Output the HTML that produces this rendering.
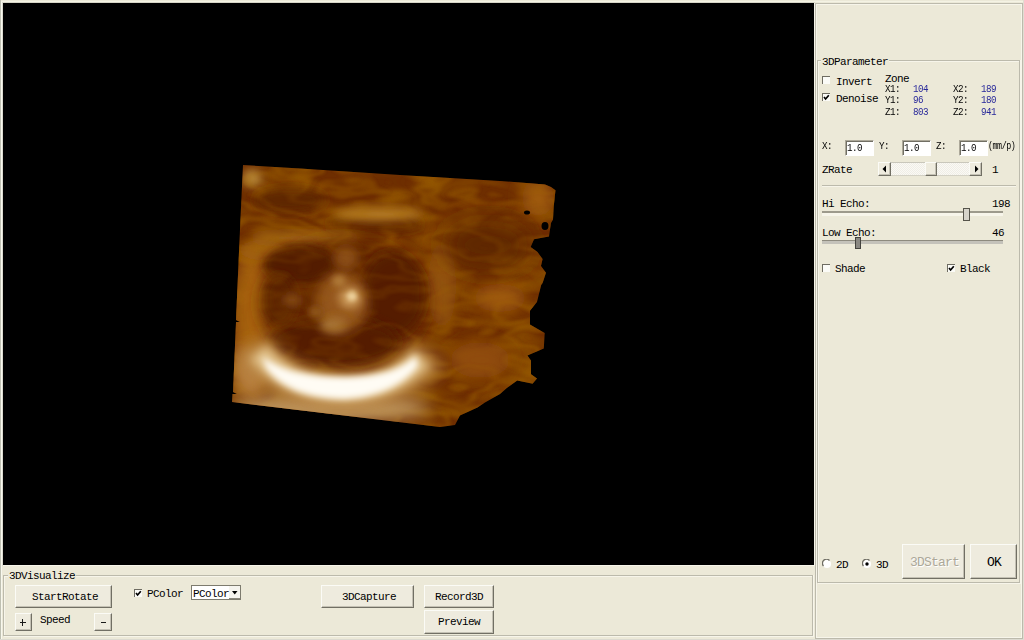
<!DOCTYPE html>
<html><head><meta charset="utf-8">
<style>
*{box-sizing:border-box;margin:0;padding:0}
html,body{width:1024px;height:640px;overflow:hidden;background:#ECE9D8}
body{position:relative;font:12px/12px "Liberation Mono",monospace;color:#000}
.a{position:absolute}
.t{position:absolute;white-space:pre;letter-spacing:-0.6px;line-height:12px;font-size:11px}
.hl{position:absolute;height:1px}
.vl{position:absolute;width:1px}
.g{background:#BCBAAC}
.w{background:#F7F5EA}
.btn{position:absolute;background:#EEEBDE;border-top:1px solid #FBFBF6;border-left:1px solid #FBFBF6;border-right:1px solid #716F64;border-bottom:1px solid #716F64}
.btn:after{content:"";position:absolute;left:0;top:0;right:0;bottom:0;border-right:1px solid #C4C1B4;border-bottom:1px solid #C4C1B4}
.edit{position:absolute;background:#fff;border-top:1px solid #ACA899;border-left:1px solid #ACA899;border-right:1px solid #fff;border-bottom:1px solid #fff}
.edit:after{content:"";position:absolute;left:0;top:0;right:0;bottom:0;border-top:1px solid #716F64;border-left:1px solid #716F64}
.cb{position:absolute;width:8px;height:8px;background:#fbfbf7;border-top:1px solid #6e6c62;border-left:1px solid #6e6c62}
.blue{color:#28289a}
.s{font-size:11px;letter-spacing:-0.6px;transform:scaleX(0.84);transform-origin:0 0}
.L{font-size:13px;letter-spacing:-0.8px}
</style></head><body>

<!-- window outer frame -->
<div class="vl" style="left:0;top:0;height:640px;background:#bfc0b2"></div>
<div class="vl" style="left:1px;top:1px;height:638px;background:#f8f8ee"></div>
<div class="vl" style="left:2px;top:2px;height:564px;background:#dcdbcf"></div>
<div class="hl" style="left:1px;top:1px;width:1022px;background:#f4f3e4"></div>
<div class="hl" style="left:2px;top:2px;width:813px;background:#d6d5c6"></div>
<div class="vl" style="left:1023px;top:0;height:640px;background:#e0ddd2"></div>
<div class="hl" style="left:0;top:639px;width:1024px;background:#dcdad0"></div>

<!-- black 3D view -->
<div class="a" style="left:3px;top:3px;width:811px;height:562px;background:#000"></div>
<div class="vl w" style="left:814px;top:3px;height:563px"></div>
<div class="hl w" style="left:3px;top:565px;width:812px"></div>

<!-- 3D volume rendering -->
<svg class="a" style="left:0;top:0" width="1024" height="640" viewBox="0 0 1024 640">
  <defs>
    <clipPath id="vol">
      <polygon points="243,165 300,168.5 400,175 500,181 545,184.5 551,187 555.5,190.3 553.8,205.8 553,219.5 551,223 549,236.5 534,239.3 530.6,247 537.5,252 542.6,259 541,266 546,272.8 542.6,283 541.2,285 537,302 530,310.8 530,324.5 544.7,333 543.8,348.6 527.5,355.4 531,360.6 531,374.3 537,378.6 532.6,383.8 517.2,380.4 506.9,388 500,394 485,402.5 477.5,407.5 460,415.6 455,425 440,427 232,402 232.5,394 237,394 233,392 236,322 240,322 236,320 240.4,220"/>
    </clipPath>
    <filter id="b2" x="-50%" y="-50%" width="200%" height="200%"><feGaussianBlur stdDeviation="2"/></filter>
    <filter id="b3" x="-50%" y="-50%" width="200%" height="200%"><feGaussianBlur stdDeviation="3"/></filter>
    <filter id="b4" x="-50%" y="-50%" width="200%" height="200%"><feGaussianBlur stdDeviation="4"/></filter>
    <filter id="b5" x="-50%" y="-50%" width="200%" height="200%"><feGaussianBlur stdDeviation="5"/></filter>
    <filter id="b6" x="-50%" y="-50%" width="200%" height="200%"><feGaussianBlur stdDeviation="6"/></filter>
    <filter id="b10" x="-50%" y="-50%" width="200%" height="200%"><feGaussianBlur stdDeviation="10"/></filter>
    <filter id="b8" x="-50%" y="-50%" width="200%" height="200%"><feGaussianBlur stdDeviation="8"/></filter>
    <filter id="b12" x="-50%" y="-50%" width="200%" height="200%"><feGaussianBlur stdDeviation="12"/></filter>
    <filter id="texL" x="0" y="0" width="100%" height="100%">
      <feTurbulence type="fractalNoise" baseFrequency="0.022 0.05" numOctaves="2" seed="11"/>
      <feColorMatrix type="matrix" values="0 0 0 0 0.70  0 0 0 0 0.36  0 0 0 0 0.0  1.6 0 0 0 -0.78"/><feGaussianBlur stdDeviation="1.5"/>
    </filter>
    <filter id="texD" x="0" y="0" width="100%" height="100%">
      <feTurbulence type="fractalNoise" baseFrequency="0.02 0.045" numOctaves="2" seed="3"/>
      <feColorMatrix type="matrix" values="0 0 0 0 0.36  0 0 0 0 0.14  0 0 0 0 0  1.6 0 0 0 -0.78"/><feGaussianBlur stdDeviation="1.5"/>
    </filter>
    <filter id="contour" x="0" y="0" width="100%" height="100%">
      <feTurbulence type="fractalNoise" baseFrequency="0.012 0.03" numOctaves="3" seed="21"/>
      <feColorMatrix type="matrix" values="0 0 0 0 0.34  0 0 0 0 0.12  0 0 0 0 0  1 0 0 0 0"/>
      <feComponentTransfer><feFuncA type="table" tableValues="0 0 0.9 0 0 0.9 0 0 0.9 0 0 0.9 0 0"/></feComponentTransfer>
      <feGaussianBlur stdDeviation="0.8"/>
    </filter>
  </defs>
  <g clip-path="url(#vol)">
    <rect x="220" y="150" width="350" height="300" fill="#6e2e00"/>
    <rect x="220" y="150" width="350" height="300" filter="url(#texL)" opacity="0.62"/>
    <rect x="220" y="150" width="350" height="300" filter="url(#texD)" opacity="0.7"/>
    <rect x="220" y="150" width="350" height="300" filter="url(#contour)" opacity="0.32"/>
    <!-- light left strip -->
    <ellipse cx="252" cy="320" rx="18" ry="75" fill="#a86410" filter="url(#b8)"/><ellipse cx="262" cy="250" rx="22" ry="10" fill="#a06010" filter="url(#b5)"/>
    <ellipse cx="252" cy="178" rx="10" ry="9" fill="#b88838" filter="url(#b5)"/>
    <ellipse cx="538" cy="198" rx="16" ry="18" fill="#a05c0c" filter="url(#b8)"/>
    <ellipse cx="442" cy="285" rx="14" ry="44" fill="#94540a" filter="url(#b8)"/>
    <ellipse cx="500" cy="298" rx="26" ry="14" fill="#a05c0c" filter="url(#b8)"/>
    <ellipse cx="480" cy="360" rx="30" ry="18" fill="#904c08" filter="url(#b8)"/>
    <!-- dark bands top-left -->
    <ellipse cx="290" cy="200" rx="36" ry="12" fill="#5e2600" filter="url(#b5)"/>
    <ellipse cx="375" cy="224" rx="48" ry="8" fill="#5e2600" filter="url(#b5)"/>
    <ellipse cx="488" cy="245" rx="45" ry="25" fill="#5e2600" filter="url(#b12)"/>
    <!-- light ring top -->
    <ellipse cx="378" cy="214" rx="44" ry="7" fill="#b47a24" filter="url(#b4)"/>
    <ellipse cx="305" cy="238" rx="55" ry="6" fill="#a86c18" filter="url(#b5)"/>
    <!-- dark head -->
    <ellipse cx="343" cy="303" rx="80" ry="62" fill="#622800" filter="url(#b10)"/>
    <ellipse cx="300" cy="265" rx="36" ry="19" fill="#521e00" filter="url(#b5)"/>
    <ellipse cx="393" cy="294" rx="32" ry="42" fill="#541f00" filter="url(#b6)"/>
    <ellipse cx="334" cy="342" rx="64" ry="24" fill="#541f00" filter="url(#b6)"/>
    <ellipse cx="280" cy="300" rx="16" ry="26" fill="#5a2200" filter="url(#b5)"/>
    <!-- light interior -->
    <ellipse cx="342" cy="302" rx="26" ry="30" fill="#94561a" filter="url(#b6)"/>
    <ellipse cx="346" cy="258" rx="12" ry="12" fill="#8a4e12" filter="url(#b5)"/>
    <ellipse cx="350" cy="298" rx="11" ry="10" fill="#d0a060" filter="url(#b5)"/><ellipse cx="352" cy="296" rx="5" ry="5" fill="#ecd09a" filter="url(#b2)"/>
    <ellipse cx="339" cy="281" rx="7" ry="6" fill="#b07a38" filter="url(#b3)"/>
    <ellipse cx="333" cy="325" rx="13" ry="8" fill="#a87434" filter="url(#b5)"/>
    <ellipse cx="292" cy="300" rx="10" ry="6" fill="#8a5014" filter="url(#b5)"/>
    <ellipse cx="316" cy="312" rx="8" ry="6" fill="#8e5418" filter="url(#b3)"/>
    <rect x="220" y="150" width="350" height="300" filter="url(#contour)" opacity="0.22"/>
    <!-- light lower band -->
    <ellipse cx="330" cy="408" rx="100" ry="14" fill="#c09860" filter="url(#b8)"/>
    <ellipse cx="250" cy="372" rx="16" ry="26" fill="#b88040" filter="url(#b8)"/>
    <ellipse cx="527" cy="212.5" rx="3" ry="2" fill="#000"/>
    <ellipse cx="545" cy="226" rx="3.5" ry="4" fill="#000"/>
    <!-- bright bottom arc -->
    <path d="M252,348 C275,378 305,392 345,392 C385,392 410,378 430,354" stroke="#b88442" stroke-width="36" fill="none" filter="url(#b8)"/>
    <path d="M258,352 C280,378 310,390 345,390 C380,390 402,378 422,358" stroke="#e0c088" stroke-width="22" fill="none" filter="url(#b5)"/>
    <path d="M262,356 C280,370 300,376 345,377 C385,376 402,368 416,356 L418,366 C405,382 385,396 345,399 C305,398 282,388 266,368 Z" fill="#fffcf4" filter="url(#b3)"/>
  </g>
</svg>

<!-- bottom group 3DVisualize -->
<div class="hl g" style="left:3px;top:575px;width:810px"></div>
<div class="hl w" style="left:4px;top:576px;width:809px"></div>
<div class="vl g" style="left:3px;top:575px;height:61px"></div>
<div class="vl w" style="left:4px;top:576px;height:59px"></div>
<div class="vl g" style="left:812px;top:575px;height:61px"></div>
<div class="vl w" style="left:813px;top:575px;height:62px"></div>
<div class="hl g" style="left:3px;top:635px;width:810px"></div>
<div class="hl w" style="left:4px;top:636px;width:810px"></div>
<div class="t" style="left:8px;top:570px;background:#ECE9D8;padding:0 1px">3DVisualize</div>

<div class="btn" style="left:15px;top:585px;width:97px;height:23px"></div>
<div class="t" style="left:32px;top:591px">StartRotate</div>
<div class="btn" style="left:15px;top:613px;width:17px;height:18px"></div>
<div class="a" style="left:20px;top:622px;width:6px;height:1px;background:#1a1a1a"></div><div class="a" style="left:22px;top:619px;width:1px;height:7px;background:#1a1a1a"></div>
<div class="t" style="left:40px;top:614px">Speed</div>
<div class="btn" style="left:94px;top:613px;width:18px;height:18px"></div>
<div class="a" style="left:101px;top:622px;width:5px;height:1px;background:#1a1a1a"></div>

<div class="cb" style="left:134px;top:589px"></div>
<svg class="a" style="left:134px;top:589px" width="9" height="9"><path d="M2,4 L3.6,6 L6.8,2.2" stroke="#000" stroke-width="1.7" fill="none"/></svg>
<div class="t" style="left:147px;top:588px">PColor</div>
<div class="a" style="left:191px;top:585px;width:50px;height:15px;background:#fff;border:1px solid #7d7b6e"></div>
<div class="a" style="left:229px;top:586px;width:11px;height:13px;background:#f5f4ee;border-bottom:1px solid #8a887c"></div>
<div class="t" style="left:193px;top:588px">PColor</div>
<svg class="a" style="left:232px;top:591px" width="6" height="4"><path d="M0,0 L5.5,0 L2.75,3.5 Z" fill="#000"/></svg>

<div class="btn" style="left:321px;top:585px;width:93px;height:23px"></div>
<div class="t" style="left:342px;top:591px">3DCapture</div>
<div class="btn" style="left:424px;top:585px;width:70px;height:23px"></div>
<div class="t" style="left:435px;top:591px">Record3D</div>
<div class="btn" style="left:424px;top:610px;width:70px;height:24px"></div>
<div class="t" style="left:438px;top:616px">Preview</div>

<!-- right panel frame -->
<div class="hl g" style="left:815px;top:3px;width:207px"></div>
<div class="hl w" style="left:816px;top:4px;width:205px"></div>
<div class="vl g" style="left:815px;top:3px;height:635px"></div>
<div class="vl w" style="left:816px;top:4px;height:633px"></div>
<div class="vl w" style="left:1021px;top:4px;height:634px"></div>
<div class="vl g" style="left:1022px;top:3px;height:636px"></div>
<div class="hl w" style="left:816px;top:637px;width:206px"></div>
<div class="hl g" style="left:815px;top:638px;width:208px"></div>

<!-- 3DParameter group -->
<div class="hl g" style="left:817px;top:60px;width:203px"></div>
<div class="hl w" style="left:818px;top:61px;width:202px"></div>
<div class="vl g" style="left:817px;top:60px;height:523px"></div>
<div class="vl w" style="left:818px;top:61px;height:521px"></div>
<div class="vl g" style="left:1019px;top:60px;height:523px"></div>
<div class="vl w" style="left:1020px;top:60px;height:524px"></div>
<div class="hl g" style="left:817px;top:582px;width:203px"></div>
<div class="hl w" style="left:818px;top:583px;width:203px"></div>
<div class="t" style="left:821px;top:56px;background:#ECE9D8;padding:0 1px">3DParameter</div>

<div class="cb" style="left:822px;top:76px"></div>
<div class="t" style="left:836px;top:76px">Invert</div>
<div class="cb" style="left:822px;top:93px"></div>
<svg class="a" style="left:822px;top:93px" width="9" height="9"><path d="M2,4 L3.6,6 L6.8,2.2" stroke="#000" stroke-width="1.7" fill="none"/></svg>
<div class="t" style="left:836px;top:93px">Denoise</div>

<div class="t" style="left:885px;top:73px">Zone</div>
<div class="t s" style="left:885px;top:83px">X1:</div>
<div class="t s blue" style="left:913px;top:83px">104</div>
<div class="t s" style="left:885px;top:94px">Y1:</div>
<div class="t s blue" style="left:913px;top:94px">96</div>
<div class="t s" style="left:885px;top:106px">Z1:</div>
<div class="t s blue" style="left:913px;top:106px">803</div>
<div class="t s" style="left:953px;top:83px">X2:</div>
<div class="t s blue" style="left:981px;top:83px">189</div>
<div class="t s" style="left:953px;top:94px">Y2:</div>
<div class="t s blue" style="left:981px;top:94px">180</div>
<div class="t s" style="left:953px;top:106px">Z2:</div>
<div class="t s blue" style="left:981px;top:106px">941</div>

<div class="t s" style="left:822px;top:140px">X:</div>
<div class="edit" style="left:845px;top:140px;width:29px;height:16px"></div>
<div class="t s" style="left:847px;top:142px">1.0</div>
<div class="t s" style="left:879px;top:140px">Y:</div>
<div class="edit" style="left:902px;top:140px;width:29px;height:16px"></div>
<div class="t s" style="left:904px;top:142px">1.0</div>
<div class="t s" style="left:936px;top:140px">Z:</div>
<div class="edit" style="left:959px;top:140px;width:29px;height:16px"></div>
<div class="t s" style="left:961px;top:142px">1.0</div>
<div class="t s" style="left:988px;top:140px;transform:scaleX(0.76)">(mm/p)</div>

<div class="t" style="left:822px;top:164px">ZRate</div>
<!-- scrollbar -->
<div class="a" style="left:878px;top:162px;width:104px;height:14px;border-top:1px solid #c9c7bb;border-bottom:1px solid #d4d2c6;background-color:#f3f1ea;background-image:repeating-conic-gradient(#F0EEE6 0 25%,#FAF9F5 0 50%);background-size:2px 2px"></div>
<div class="btn" style="left:878px;top:162px;width:13px;height:14px"></div>
<svg class="a" style="left:881px;top:165px" width="8" height="8"><path d="M5,0.5 L5,7.5 L1.5,4 Z" fill="#000"/></svg>
<div class="btn" style="left:925px;top:162px;width:12px;height:14px"></div>
<div class="btn" style="left:969px;top:162px;width:13px;height:14px"></div>
<svg class="a" style="left:972px;top:165px" width="8" height="8"><path d="M3,0.5 L3,7.5 L6.5,4 Z" fill="#000"/></svg>
<div class="t" style="left:992px;top:164px">1</div>

<div class="hl g" style="left:822px;top:185px;width:194px"></div>
<div class="hl w" style="left:822px;top:186px;width:194px"></div>

<div class="t" style="left:822px;top:198px">Hi Echo:</div>
<div class="t" style="left:992px;top:198px">198</div>
<div class="hl" style="left:822px;top:211px;width:181px;height:2px;background:#9d9a8c"></div>
<div class="hl w" style="left:822px;top:213px;width:181px;height:3px"></div>
<div class="a" style="left:963px;top:208px;width:7px;height:13px;background:#d6d3ca;border:1px solid #55534a"></div>

<div class="t" style="left:822px;top:227px">Low Echo:</div>
<div class="t" style="left:992px;top:227px">46</div>
<div class="hl" style="left:822px;top:240px;width:181px;height:1px;background:#8d8a7e"></div>
<div class="hl" style="left:822px;top:241px;width:181px;height:3px;background:#c4c2ba"></div>
<div class="a" style="left:855px;top:237px;width:6px;height:12px;background:#8a8882;border:1px solid #44433e"></div>

<div class="cb" style="left:822px;top:264px"></div>
<div class="t" style="left:835px;top:263px">Shade</div>
<div class="cb" style="left:947px;top:264px"></div>
<svg class="a" style="left:947px;top:264px" width="9" height="9"><path d="M2,4 L3.6,6 L6.8,2.2" stroke="#000" stroke-width="1.7" fill="none"/></svg>
<div class="t" style="left:960px;top:263px">Black</div>

<!-- radios -->
<svg class="a" style="left:822px;top:559px" width="10" height="10"><circle cx="5" cy="5" r="4" fill="#fff"/><path d="M1.5,7 A4,4 0 0 1 7.5,1.5" stroke="#6f6d64" stroke-width="1.3" fill="none"/></svg>
<div class="t" style="left:836px;top:559px">2D</div>
<svg class="a" style="left:862px;top:559px" width="10" height="10"><circle cx="5" cy="5" r="4" fill="#fff"/><path d="M1.5,7 A4,4 0 0 1 7.5,1.5" stroke="#6f6d64" stroke-width="1.3" fill="none"/><circle cx="5" cy="5" r="1.7" fill="#000"/></svg>
<div class="t" style="left:876px;top:559px">3D</div>

<div class="btn" style="left:902px;top:544px;width:63px;height:35px"></div>
<div class="t L" style="left:911px;top:558px;color:#fff">3DStart</div>
<div class="t L" style="left:910px;top:557px;color:#ACA899">3DStart</div>
<div class="btn" style="left:970px;top:544px;width:47px;height:35px"></div>
<div class="t L" style="left:987px;top:557px">OK</div>

</body></html>
